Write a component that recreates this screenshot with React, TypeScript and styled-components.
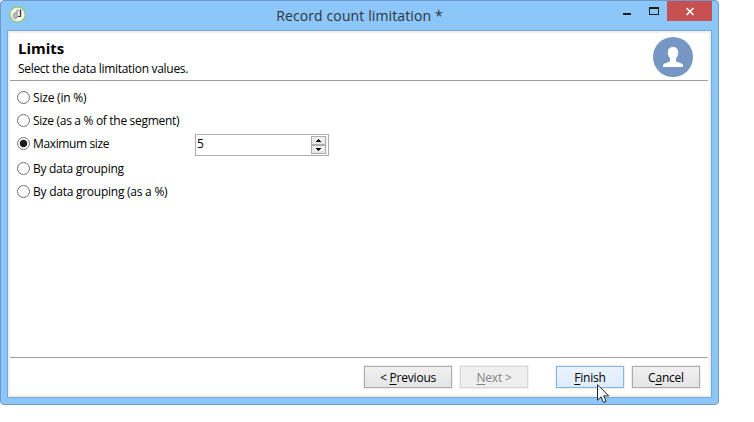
import React from "react";
import styled, { createGlobalStyle } from "styled-components";

const GlobalStyle = createGlobalStyle`
  html, body { margin: 0; background: #fff; }
  body { font: 12px/16px "Open Sans", "Noto Sans", sans-serif; color: #000; overflow: hidden; }
  * { box-sizing: border-box; }
  svg { display: block; }
`;

const Stage = styled.div`
  position: relative;
  width: 754px;
  height: 422px;
`;

const Window = styled.section`
  display: flex;
  flex-direction: column;
  width: 719px;
  height: 405px;
  padding: 0 6px 6px 6px;
  border: 1px solid #6c9bc7;
  border-radius: 4px;
  background: #8dc7fa;
`;

const TitleBar = styled.header`
  display: grid;
  grid-template-columns: 200px 1fr 200px;
  height: 29px;
  flex: none;
`;

const AppIcon = styled.div`
  padding: 5px 0 0 2px;
`;

const Title = styled.h1`
  margin: 5px 0 0;
  text-align: center;
  font-size: 14px;
  line-height: 19px;
  font-weight: 400;
  color: #2b3440;
  letter-spacing: 0.12px;
  white-space: nowrap;
`;

const Controls = styled.div`
  display: flex;
  justify-content: flex-end;
  height: 20px;
`;

const Control = styled.button<{ $w: number; $close?: boolean }>`
  width: ${(p) => p.$w}px;
  height: 20px;
  padding: 0;
  border: 0;
  background: ${(p) => (p.$close ? "#c75050" : "transparent")};
`;

const Frame = styled.main`
  flex: 1;
  display: flex;
  flex-direction: column;
  border: 1px solid #78a9d5;
  padding: 2px;
  background: #f0f0f0;
`;

const Page = styled.div`
  flex: 1;
  display: flex;
  flex-direction: column;
  background: #fff;
`;

const Heading = styled.div`
  display: flex;
  justify-content: space-between;
  height: 48px;
  margin-right: 1px;
  padding: 4px 15px 0 8px;
  border-bottom: 1px solid #a0a0a0;
`;

const HeadingTitle = styled.h2`
  margin: 1px 0 3px;
  font-size: 15px;
  line-height: 20px;
  font-weight: 700;
  letter-spacing: 0;
`;

const Text = styled.span<{ $spacing?: number }>`
  white-space: nowrap;
  letter-spacing: ${(p) => p.$spacing ?? -0.2}px;
`;

const Options = styled.div`
  flex: 1;
  display: grid;
  grid-template-rows: 23px 23px 25px 23px 23px;
  padding: 5px 0 0 7px;
`;

const OptionRow = styled.div`
  display: grid;
  grid-template-columns: 178px 134px;
  align-items: start;
`;

const Option = styled.label`
  display: flex;
  gap: 3px;
  padding-top: 4px;
  align-items: flex-start;
`;

const Radio = styled.span<{ $on?: boolean }>`
  width: 13px;
  height: 13px;
  margin-top: 1px;
  border: 1px solid #707070;
  border-radius: 50%;
  background: ${(p) => (p.$on ? "radial-gradient(circle, #1c1c1c 3.3px, #fff 4.2px)" : "#fff")};
`;

const Spinner = styled.div`
  display: flex;
  justify-content: space-between;
  width: 134px;
  height: 22px;
  margin-top: 2px;
  border: 1px solid #abadb3;
  padding: 1px 1px 1px 1px;
`;

const Arrows = styled.div`
  display: grid;
  grid-template-rows: 9px 9px;
  width: 16px;
  background: #f0f0f0;
`;

const Arrow = styled.button`
  display: flex;
  align-items: center;
  justify-content: center;
  height: 9px;
  padding: 0;
  width: 15px;
  border: 1px solid #acacac;
  background: linear-gradient(#f2f2f2, #e6e6e6);
`;

const Footer = styled.footer`
  display: flex;
  height: 38px;
  margin-right: 1px;
  padding: 8px 8px 0 0;
  gap: 8px;
  justify-content: flex-end;
  border-top: 1px solid #a0a0a0;
`;

const Button = styled.button<{ $w: number; $kind?: "hot" | "off"; $before?: number }>`
  width: ${(p) => p.$w}px;
  height: 22px;
  margin-left: ${(p) => p.$before ?? 0}px;
  padding: 0;
  font: inherit;
  line-height: 19px;
  color: ${(p) => (p.$kind === "off" ? "#838383" : "#000")};
  border: 1px solid ${(p) => (p.$kind === "hot" ? "#7eb4ea" : p.$kind === "off" ? "#d9d9d9" : "#acacac")};
  background: ${(p) =>
    p.$kind === "hot" ? "linear-gradient(#ecf4fc, #dcecfc)" : p.$kind === "off" ? "#efefef" : "linear-gradient(#f0f0f0, #e5e5e5)"};
  box-shadow: 0 0 0 1px #f0f0f0;
`;

const Key = styled.span`
  text-decoration: underline;
  text-underline-offset: 2px;
  text-decoration-thickness: 1px;
  text-decoration-skip-ink: none;
`;

const Pointer = styled.svg`
  position: absolute;
  left: 597px;
  top: 384px;
`;

const options = [
  { label: "Size (in %)", spacing: -0.2 },
  { label: "Size (as a % of the segment)", spacing: -0.31 },
  { label: "Maximum size", spacing: -0.37, value: "5" },
  { label: "By data grouping", spacing: -0.28 },
  { label: "By data grouping (as a %)", spacing: -0.25 },
];

function Logo() {
  return (
    <svg width="17" height="17" viewBox="0 0 17 17">
      <circle cx="8.5" cy="8.5" r="7.6" fill="#f5f6f4" stroke="#96c356" strokeWidth="1.1" />
      <path d="M3.5 8 7 5.5v8L3.5 12z" fill="#bfc3c0" />
      <path d="M5 12V8.5L7.5 6" fill="none" stroke="#969b97" />
      <path d="M8 4v6.5L6.5 13" fill="none" stroke="#737975" />
      <path d="M8.5 4h2" stroke="#9a9f9c" />
      <path d="M11.5 3.5V11" stroke="#2d332f" strokeWidth="1.3" />
      <path d="M8.5 10.5H12" stroke="#454b47" />
    </svg>
  );
}

function Avatar() {
  return (
    <svg width="40" height="40" viewBox="0 0 40 40">
      <circle cx="20" cy="20" r="20" fill="#7696c4" />
      <path
        d="M20 10c3.3 0 5.2 2.1 5.2 5.5 0 2.5-1 4.6-2.2 6v2c0 1 1.1 1.4 3 2.1 2.7.9 4.1 1.5 4.1 3.5v1H10v-1c0-2 1.4-2.6 4.1-3.5 1.9-.7 3-1.1 3-2.1v-2c-1.3-1.4-2.3-3.5-2.3-6C14.8 12.1 16.7 10 20 10z"
        fill="#fff"
      />
    </svg>
  );
}

export default function App() {
  return (
    <>
      <GlobalStyle />
      <Stage>
        <Window>
          <TitleBar>
            <AppIcon><Logo /></AppIcon>
            <Title>Record count limitation *</Title>
            <Controls>
              <Control $w={26} aria-label="Minimize">
                <svg width="26" height="20" shapeRendering="crispEdges"><path d="M8 12h8v2H8z" fill="#1e1e1e" /></svg>
              </Control>
              <Control $w={26} aria-label="Maximize">
                <svg width="26" height="20" shapeRendering="crispEdges">
                  <path d="M8 6h10v8H8zM9 8v5h8V8z" fill="#1e1e1e" fillRule="evenodd" />
                </svg>
              </Control>
              <Control $w={45} $close aria-label="Close">
                <svg width="45" height="20"><path d="m19.5 7 7 7M26.5 7l-7 7" stroke="#fff" strokeWidth="1.7" /></svg>
              </Control>
            </Controls>
          </TitleBar>
          <Frame>
            <Page>
              <Heading>
                <div>
                  <HeadingTitle>Limits</HeadingTitle>
                  <Text as="div" $spacing={-0.31}>Select the data limitation values.</Text>
                </div>
                <Avatar />
              </Heading>
              <Options>
                {options.map((o) => (
                  <OptionRow key={o.label}>
                    <Option>
                      <Radio $on={!!o.value} />
                      <Text $spacing={o.spacing}>{o.label}</Text>
                    </Option>
                    {o.value && (
                      <Spinner>
                        <Text>{o.value}</Text>
                        <Arrows>
                          <Arrow aria-label="Increase">
                            <svg width="5" height="3" shapeRendering="crispEdges"><path d="M2 0h1v1h1v1h1v1H0V2h1V1h1z" /></svg>
                          </Arrow>
                          <Arrow aria-label="Decrease">
                            <svg width="5" height="3" shapeRendering="crispEdges"><path d="M0 0h5v1H4v1H3v1H2V2H1V1H0z" /></svg>
                          </Arrow>
                        </Arrows>
                      </Spinner>
                    )}
                  </OptionRow>
                ))}
              </Options>
              <Footer>
                <Button $w={88}><Text>&lt; <Key>P</Key>revious</Text></Button>
                <Button $w={68} $kind="off"><Text><Key>N</Key>ext &gt;</Text></Button>
                <Button $w={68} $kind="hot" $before={20}><Text><Key>F</Key>inish</Text></Button>
                <Button $w={68}><Text>C<Key>a</Key>ncel</Text></Button>
              </Footer>
            </Page>
          </Frame>
        </Window>
        <Pointer width="13" height="21" viewBox="0 0 13 21">
          <path d="M.5.7v15.5l3.6-3.4 2.4 5.7 2.6-1.1-2.4-5.5h5z" fill="#fff" stroke="#20242c" />
        </Pointer>
      </Stage>
    </>
  );
}
